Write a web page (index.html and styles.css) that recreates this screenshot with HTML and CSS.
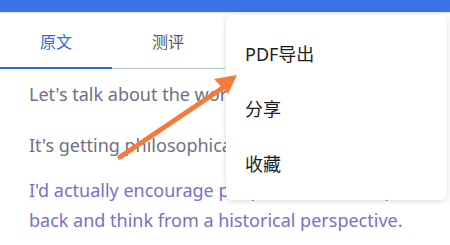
FILE: index.html
```html
<!DOCTYPE html>
<html lang="zh">
<head>
<meta charset="utf-8">
<link rel="stylesheet" href="styles.css">
</head>
<body>
<div class="topbar"></div>
<div class="tabs">
  <div class="tab active">原文</div>
  <div class="tab">测评</div>
</div>
<div class="content">
  <p class="line gray">Let's talk about the world we live in today.</p>
  <p class="line gray last">It's getting philosophical, isn't it?</p>
  <p class="para purple">I'd actually encourage people to take a step back and think from a historical perspective.</p>
</div>
<div class="menu">
  <div class="menu-item">PDF导出</div>
  <div class="menu-item">分享</div>
  <div class="menu-item">收藏</div>
</div>
<svg class="arrow" width="450" height="245" viewBox="0 0 450 245">
  <line x1="120" y1="157" x2="224" y2="87" stroke="#f47b3c" stroke-width="5" stroke-linecap="round"/>
  <polygon points="237,75 214,79 228,94" fill="#f47b3c"/>
</svg>
</body>
</html>
```
FILE: styles.css
```css
html, body {
  margin: 0;
  padding: 0;
  background: #ffffff;
  width: 450px;
  height: 245px;
  overflow: hidden;
  font-family: "Noto Sans", "Noto Sans CJK SC", sans-serif;
}
.topbar {
  height: 12px;
  background: #3b73e7;
  border-bottom: 1px solid #dfe9f2;
}
.tabs {
  display: flex;
  height: 55px;
  width: 225px;
  border-bottom: 1px solid #b4c8c4;
}
.tab {
  width: 112px;
  display: flex;
  align-items: center;
  justify-content: center;
  font-size: 16px;
  color: #555555;
  padding-top: 1px;
  box-sizing: border-box;
}
.tab.active {
  color: #2f6bd9;
  border-bottom: 2px solid #3467d6;
  margin-bottom: -1px;
}
.content {
  padding-left: 29px;
  padding-top: 10px;
  white-space: nowrap;
}
.line {
  margin: 0 0 21px 0;
  font-size: 18px;
  line-height: 30px;
}
.line.last {
  margin-bottom: 15px;
}
.para {
  margin: 0;
  font-size: 18px;
  line-height: 30px;
  white-space: normal;
  width: 400px;
}
.gray { color: #707083; }
.purple { color: #7a6fcb; }
.menu {
  position: absolute;
  left: 226px;
  top: 15px;
  width: 221px;
  height: 185px;
  background: #ffffff;
  border-radius: 6px;
  box-shadow: 0 1px 6px rgba(0,0,0,0.15);
  padding-top: 10px;
  box-sizing: border-box;
}
.menu-item {
  height: 55px;
  display: flex;
  align-items: center;
  padding-left: 19px;
  font-size: 18px;
  color: #1e1e1e;
}
.arrow {
  position: absolute;
  left: 0;
  top: 0;
  pointer-events: none;
}
```
